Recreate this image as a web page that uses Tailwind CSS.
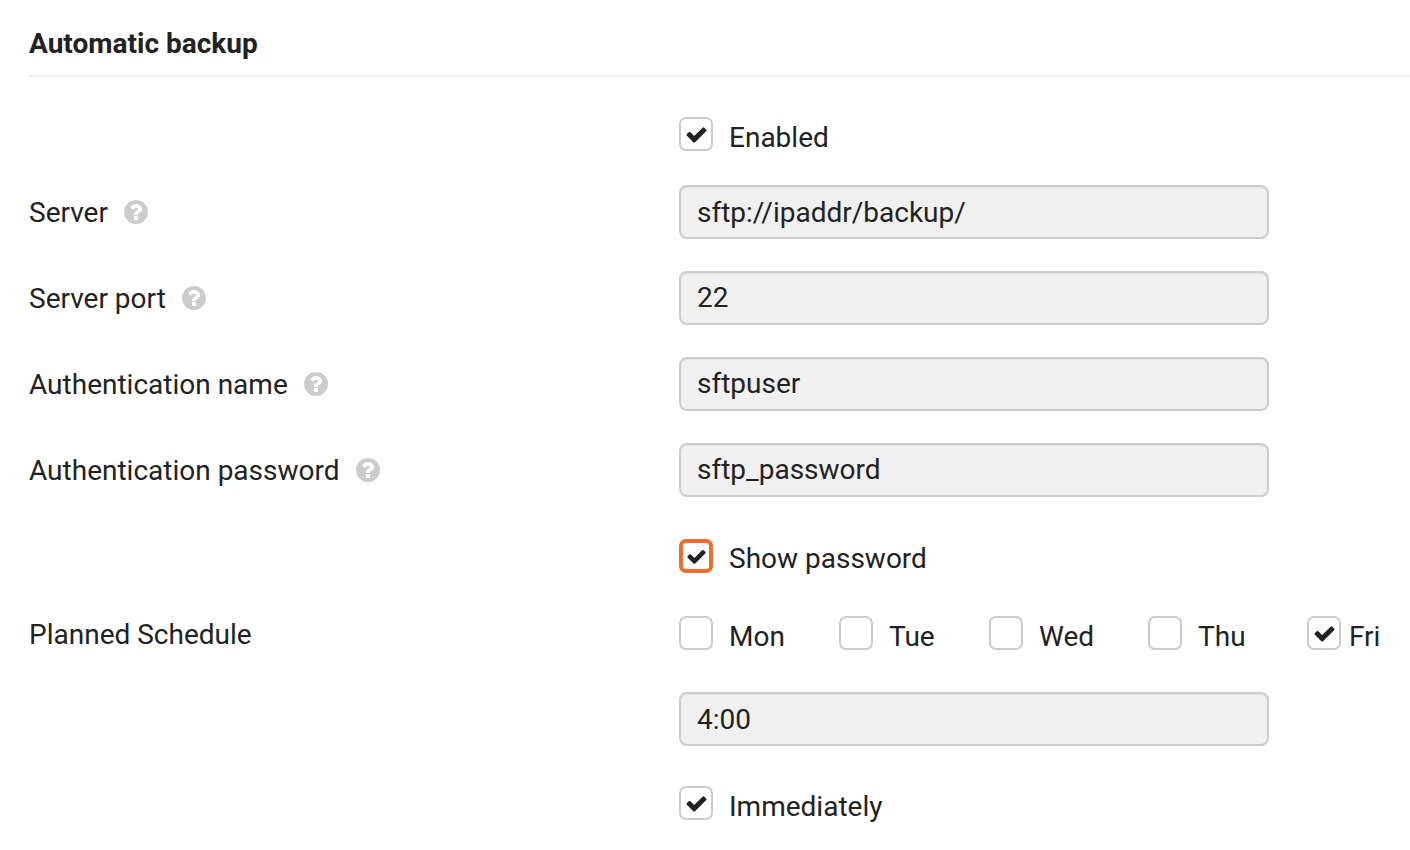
<!DOCTYPE html>
<html>
<head>
<meta charset="utf-8">
<script src="https://cdn.jsdelivr.net/npm/@tailwindcss/browser@4"></script>
</head>
<body class="bg-white overflow-hidden">
<svg class="hidden">
<symbol id="chk" viewBox="0 0 1792 1792"><path fill="#222" d="M1671 566q0 40-28 68l-724 724-136 136q-28 28-68 28t-68-28l-136-136-362-362q-28-28-28-68t28-68l136-136q28-28 68-28t68 28l294 295 656-657q28-28 68-28t68 28l136 136q28 28 28 68z"/></symbol>
<symbol id="q" viewBox="0 0 1792 1792"><path fill="#ccc" d="M1024 1376v-192q0-14-9-23t-23-9h-192q-14 0-23 9t-9 23v192q0 14 9 23t23 9h192q14 0 23-9t9-23zm256-672q0-88-55.5-163t-138.5-116-170-41q-243 0-371 213-15 24 8 42l132 100q7 6 19 6 16 0 25-12 53-68 86-92 34-24 86-24 48 0 85.5 26t37.5 59q0 38-20 61t-68 45q-63 28-115.5 86.5t-52.5 125.5v36q0 14 9 23t23 9h192q14 0 23-9t9-23q0-19 21.5-49.5t54.5-49.5q32-18 49-28.5t46-35 44.5-48 28-60.5 12.5-81zm384 192q0 209-103 385.5t-279.5 279.5-385.5 103-385.5-103-279.5-279.5-103-385.5 103-385.5 279.5-279.5 385.5-103 385.5 103 279.5 279.5 103 385.5z"/></symbol>
</svg>
<div class="w-[1410px] h-[850px] pl-[29px] text-[#222] text-[28px] leading-[34px] font-['Roboto',sans-serif]">
  <h2 class="h-[77px] pt-[27px] border-b-2 border-[#eeeeee] font-bold text-[28px] leading-[34px]">Automatic backup</h2>

  <div class="flex mt-[40px] h-[34px]">
    <div class="w-[650px]"></div>
    <label class="flex items-center gap-[16px]"><span class="w-[34px] h-[34px] rounded-[7px] border-2 border-[#ccc] flex items-center justify-center"><svg class="w-[23px] h-[23px]"><use href="#chk"/></svg></span><span class="pt-[8px]">Enabled</span></label>
  </div>

  <div class="flex items-center mt-[34px] h-[54px]">
    <div class="w-[650px] pt-[2px] flex items-center gap-[14px]"><span>Server</span><svg class="w-[28px] h-[28px] -mt-[2px]"><use href="#q"/></svg></div>
    <div class="w-[590px] h-[54px] pl-[16px] pt-[2px] flex items-center rounded-lg border-2 border-[#ccc] bg-[#f0f0f0] shadow-[inset_0_1px_1px_rgba(0,0,0,0.06)]">sftp://ipaddr/backup/</div>
  </div>
  <div class="flex items-center mt-[32px] h-[54px]">
    <div class="w-[650px] pt-[2px] flex items-center gap-[14px]"><span>Server port</span><svg class="w-[28px] h-[28px] -mt-[2px]"><use href="#q"/></svg></div>
    <div class="w-[590px] h-[54px] pl-[16px] flex items-center rounded-lg border-2 border-[#ccc] bg-[#f0f0f0] shadow-[inset_0_1px_1px_rgba(0,0,0,0.06)]">22</div>
  </div>
  <div class="flex items-center mt-[32px] h-[54px]">
    <div class="w-[650px] pt-[2px] flex items-center gap-[14px]"><span>Authentication name</span><svg class="w-[28px] h-[28px] -mt-[2px]"><use href="#q"/></svg></div>
    <div class="w-[590px] h-[54px] pl-[16px] flex items-center rounded-lg border-2 border-[#ccc] bg-[#f0f0f0] shadow-[inset_0_1px_1px_rgba(0,0,0,0.06)]">sftpuser</div>
  </div>
  <div class="flex items-center mt-[32px] h-[54px]">
    <div class="w-[650px] pt-[2px] flex items-center gap-[14px]"><span>Authentication password</span><svg class="w-[28px] h-[28px] -mt-[2px]"><use href="#q"/></svg></div>
    <div class="w-[590px] h-[54px] pl-[16px] flex items-center rounded-lg border-2 border-[#ccc] bg-[#f0f0f0] shadow-[inset_0_1px_1px_rgba(0,0,0,0.06)]">sftp_password</div>
  </div>

  <div class="flex mt-[42px] h-[34px]">
    <div class="w-[650px]"></div>
    <label class="flex items-center gap-[16px]"><span class="w-[34px] h-[34px] rounded-[7px] border-4 border-[#f26b2d] flex items-center justify-center"><svg class="w-[21px] h-[21px] shrink-0"><use href="#chk"/></svg></span><span class="pt-[6px]">Show password</span></label>
  </div>

  <div class="flex mt-[43px] h-[34px]">
    <div class="w-[650px] pt-[2px]"><span>Planned Schedule</span></div>
    <label class="flex items-center gap-[16px] w-[160px]"><span class="w-[34px] h-[34px] rounded-[7px] border-2 border-[#ccc]"></span><span class="pt-[8px]">Mon</span></label>
    <label class="flex items-center gap-[16px] w-[150px]"><span class="w-[34px] h-[34px] rounded-[7px] border-2 border-[#ccc]"></span><span class="pt-[8px]">Tue</span></label>
    <label class="flex items-center gap-[16px] w-[159px]"><span class="w-[34px] h-[34px] rounded-[7px] border-2 border-[#ccc]"></span><span class="pt-[8px]">Wed</span></label>
    <label class="flex items-center gap-[16px] w-[159px]"><span class="w-[34px] h-[34px] rounded-[7px] border-2 border-[#ccc]"></span><span class="pt-[8px]">Thu</span></label>
    <label class="flex items-center gap-[8px]"><span class="w-[34px] h-[34px] rounded-[7px] border-2 border-[#ccc] flex items-center justify-center"><svg class="w-[23px] h-[23px]"><use href="#chk"/></svg></span><span class="pt-[8px]">Fri</span></label>
  </div>

  <div class="flex items-center mt-[42px] h-[54px]">
    <div class="w-[650px]"></div>
    <div class="w-[590px] h-[54px] pl-[16px] pt-[2px] flex items-center rounded-lg border-2 border-[#ccc] bg-[#f0f0f0] shadow-[inset_0_1px_1px_rgba(0,0,0,0.06)]">4:00</div>
  </div>

  <div class="flex mt-[40px] h-[34px]">
    <div class="w-[650px]"></div>
    <label class="flex items-center gap-[16px]"><span class="w-[34px] h-[34px] rounded-[7px] border-2 border-[#ccc] flex items-center justify-center"><svg class="w-[23px] h-[23px]"><use href="#chk"/></svg></span><span class="pt-[8px]">Immediately</span></label>
  </div>
</div>
</body>
</html>
